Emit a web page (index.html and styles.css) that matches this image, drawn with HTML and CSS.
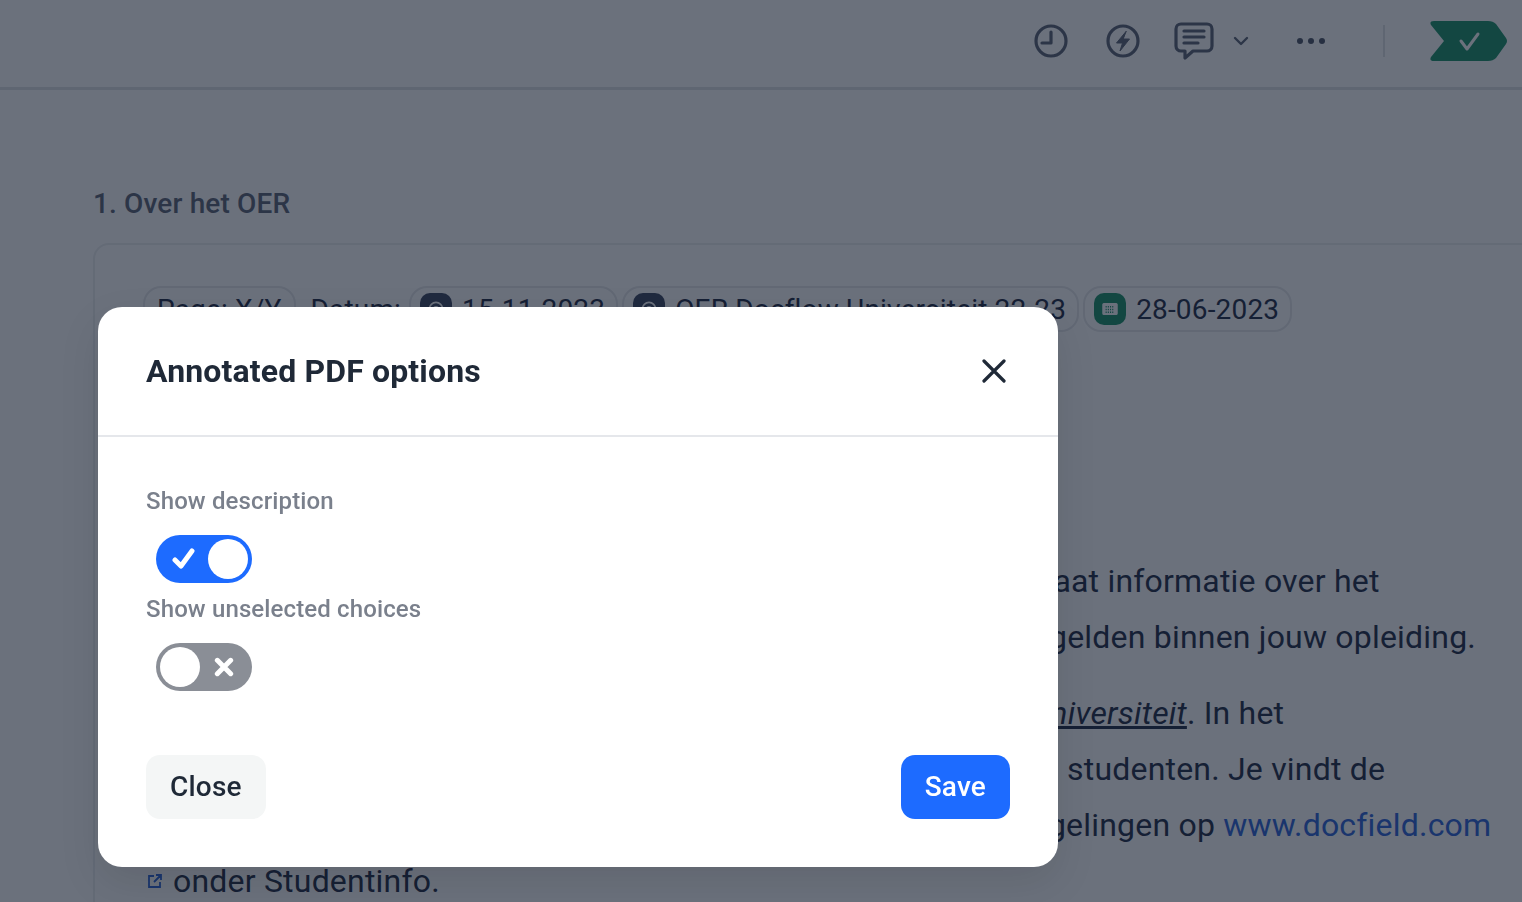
FILE: index.html
```html
<!DOCTYPE html>
<html lang="nl">
<head>
<meta charset="utf-8">
<title>Annotated PDF options</title>
<link rel="stylesheet" href="styles.css">
</head>
<body>
<header class="topbar">
  <svg class="ico ico-clock" viewBox="0 0 36 36"><circle cx="18" cy="18" r="15" /><path d="M18 9v11H9"/></svg>
  <svg class="ico ico-bolt" viewBox="0 0 36 36"><circle cx="18" cy="18" r="15"/><path class="bolt-fill" d="M21 8.500 11.500 20h6l-2.500 8L24.500 16h-6z"/></svg>
  <svg class="ico ico-chat" viewBox="0 0 40 38"><path d="M7 2h26a5 5 0 0 1 5 5v17a5 5 0 0 1-5 5H19l-8 7v-7H7a5 5 0 0 1-5-5V7a5 5 0 0 1 5-5z"/><path d="M10 9h20M10 15h20M10 21h14"/></svg>
  <svg class="ico ico-chev" viewBox="0 0 16 10"><path d="M2 2l6 6 6-6"/></svg>
  <svg class="ico-dots" viewBox="0 0 30 8"><circle cx="4" cy="4" r="3"/><circle cx="15" cy="4" r="3"/><circle cx="26" cy="4" r="3"/></svg>
  <span class="bar-divider"></span>
  <svg class="tag" viewBox="0 0 78 40"><path d="M4 0h54q5 0 8 3l10 14q2 3 0 6L66 37q-3 3-8 3H4q-5 0-3-4l13-16L1 4q-2-4 3-4z"/><path class="tag-check" d="M31 20l6 8 11-15"/></svg>
</header>

<main class="content">
  <h2 class="section-title">1. Over het OER</h2>
  <section class="card">
    <div class="chips">
      <span class="chip chip-plain">Page: X/Y</span>
      <span class="chip-label">Datum:</span>
      <span class="chip"><span class="chip-icon chip-icon-gray"><svg viewBox="0 0 20 20"><circle cx="10" cy="10" r="6"/><circle cx="10" cy="10" r="2"/></svg></span>15-11-2023</span>
      <span class="chip"><span class="chip-icon chip-icon-gray"><svg viewBox="0 0 20 20"><circle cx="10" cy="10" r="6"/><circle cx="10" cy="10" r="2"/></svg></span>OER Docflow Universiteit 22-23</span>
      <span class="chip"><span class="chip-icon chip-icon-green"><svg viewBox="0 0 20 20"><rect x="3.500" y="5" width="13" height="10" rx="1"/><path class="cal-dots" d="M6 8h8M6 10.500h8M6 13h8"/></svg></span>28-06-2023</span>
    </div>
    <div class="body-text">
      <p class="line line-1">staat informatie over het</p>
      <p class="line line-2">gelden binnen jouw opleiding.</p>
      <p class="line line-3 para-gap"><em class="uni">Universiteit</em>. In het</p>
      <p class="line line-4">studenten. Je vindt de</p>
      <p class="line line-5">regelingen op <a class="link" href="#">www.docfield.com</a></p>
      <p class="line line-6"><svg class="ext" viewBox="0 0 16 16"><path d="M7 3H2v11h11V9M9 2h5v5M14 2 7 9"/></svg>onder Studentinfo.</p>
    </div>
  </section>
</main>

<div class="overlay"></div>

<div class="modal" role="dialog">
  <div class="modal-head">
    <h1 class="modal-title">Annotated PDF options</h1>
    <svg class="modal-x" viewBox="0 0 24 24"><path d="M2 2l20 20M22 2 2 22"/></svg>
  </div>
  <div class="modal-body">
    <div class="field-label">Show description</div>
    <div class="toggle toggle-on">
      <svg class="toggle-mark" viewBox="0 0 24 24"><path d="M3 13l6 6L20 4"/></svg>
      <span class="knob"></span>
    </div>
    <div class="field-label">Show unselected choices</div>
    <div class="toggle toggle-off">
      <span class="knob"></span>
      <svg class="toggle-mark" viewBox="0 0 24 24"><path d="M4 4l16 16M20 4 4 20"/></svg>
    </div>
  </div>
  <div class="modal-foot">
    <button class="btn btn-close">Close</button>
    <button class="btn btn-save">Save</button>
  </div>
</div>
</body>
</html>
```
FILE: styles.css
```css
* { box-sizing: border-box; }
html, body { margin: 0; height: 100%; overflow: hidden; }
body { background: #fff; font-family: Roboto, "Liberation Sans", sans-serif; color: #1f2a44; }

.topbar {
  height: 90px;
  display: flex;
  align-items: center;
  padding: 0 14px 6px 0;
  justify-content: flex-end;
  background: #fff;
  border-bottom: 3px solid #dfe1e4;
}
.ico { fill: none; stroke: #5b6375; stroke-width: 3.200; stroke-linecap: round; stroke-linejoin: round; }
.ico-clock, .ico-bolt { width: 36px; height: 36px; margin-right: 36px; }
.ico-bolt { margin-right: 33px; }
.bolt-fill { fill: #5b6375; stroke-width: 1; }
.ico-chat { width: 40px; height: 38px; margin-right: 19px; }
.ico-chev { width: 16px; height: 10px; margin-right: 47px; stroke-width: 2.400; }
.ico-dots { width: 30px; height: 8px; fill: #4b5365; margin-right: 57px; }
.bar-divider { width: 2px; height: 32px; background: #dfe1e4; margin-right: 45px; }
.tag { width: 78px; height: 40px; fill: #1a9068; }
.tag-check { fill: none; stroke: #fff; stroke-width: 3; stroke-linecap: round; stroke-linejoin: round; }

.content { padding: 96px 0 0 93px; }
.section-title { margin: 0; font-size: 28px; line-height: 36px; font-weight: 500; color: #5b6375; letter-spacing: .14px; }
.card {
  margin-top: 21px;
  height: 700px;
  margin-right: -40px;
  border: 2px solid #eceef0;
  border-radius: 16px;
  padding: 41px 0 0 48px;
}
.chips { display: flex; align-items: center; gap: 4px; font-size: 28px; white-space: nowrap; letter-spacing: .17px; }
.chip {
  display: flex;
  align-items: center;
  gap: 10px;
  height: 46px;
  padding: 0 11px 0 9px;
  border: 2px solid #e6e8eb;
  border-radius: 18px;
}
.chip-plain { padding: 0 12px; margin-right: 11px; }
.chip-label { margin-right: 4px; }
.chip-icon { width: 32px; height: 32px; border-radius: 10px; display: flex; align-items: center; justify-content: center; }
.chip-icon svg { width: 22px; height: 22px; fill: none; stroke: #fff; stroke-width: 1.500; }
.chip-icon-gray { background: #3b4560; }
.chip-icon-green { background: #1a9068; }
.chip-icon-green svg { fill: #fff; stroke: #fff; stroke-width: 1; }
.cal-dots { stroke: #1a9068; stroke-width: 1.400; stroke-dasharray: 1 1; }

.body-text { margin-top: 221px; font-size: 32px; line-height: 56px; white-space: nowrap; letter-spacing: .2px; }
.line { margin: 0; }
.line-1 { padding-left: 883px; }
.line-2 { padding-left: 906px; }
.line-3 { padding-left: 887px; }
.line-4 { padding-left: 924px; }
.line-5 { padding-left: 877px; }
.line-6 { display: flex; align-items: center; padding-left: 4px; }
.para-gap { margin-top: 20px; }
.uni { text-decoration: underline; }
.link { color: #2a62d8; text-decoration: none; }
.ext { width: 16px; height: 16px; margin-right: 10px; fill: none; stroke: #2a62d8; stroke-width: 1.800; }

.overlay { position: fixed; inset: 0; background: rgba(16, 26, 44, .62); }

.modal {
  position: fixed;
  left: 98px;
  top: 307px;
  width: 960px;
  height: 560px;
  background: #fff;
  border-radius: 24px;
  box-shadow: 0 16px 40px rgba(0, 0, 0, .1);
  display: flex;
  flex-direction: column;
}
.modal-head {
  height: 130px;
  flex: none;
  display: flex;
  align-items: center;
  justify-content: space-between;
  padding: 0 52px 0 48px;
  border-bottom: 2px solid #e5e7eb;
}
.modal-title { margin: 0; font-size: 32px; line-height: 40px; font-weight: 700; color: #1f2937; letter-spacing: .15px; }
.modal-x { width: 24px; height: 24px; fill: none; stroke: #1f2937; stroke-width: 3.200; stroke-linecap: round; }
.modal-body { padding: 46px 48px 0; flex: 1; }
.field-label { font-size: 24px; line-height: 36px; font-weight: 500; color: #7a808c; letter-spacing: .13px; }
.toggle {
  width: 96px;
  height: 48px;
  margin: 16px 0 8px 10px;
  border-radius: 24px;
  display: flex;
  align-items: center;
  justify-content: space-between;
  padding: 0 4px;
}
.toggle-on { background: #1d6bff; padding-left: 16px; }
.toggle-off { background: #8a8e96; padding-right: 18px; }
.knob { width: 40px; height: 40px; border-radius: 50%; background: #fff; }
.toggle-mark { width: 24px; height: 24px; fill: none; stroke: #fff; stroke-width: 5; stroke-linecap: round; stroke-linejoin: round; }
.toggle-off .toggle-mark { width: 20px; height: 20px; stroke-width: 6; }
.modal-foot { display: flex; justify-content: space-between; padding: 0 48px 48px; }
.btn { height: 64px; border: 0; border-radius: 14px; font: 500 28px Roboto, "Liberation Sans", sans-serif; padding: 0 24px 2px; letter-spacing: .2px; }
.btn-close { background: #f4f6f6; color: #1f2937; }
.btn-save { background: #1d6bff; color: #fff; }
```
